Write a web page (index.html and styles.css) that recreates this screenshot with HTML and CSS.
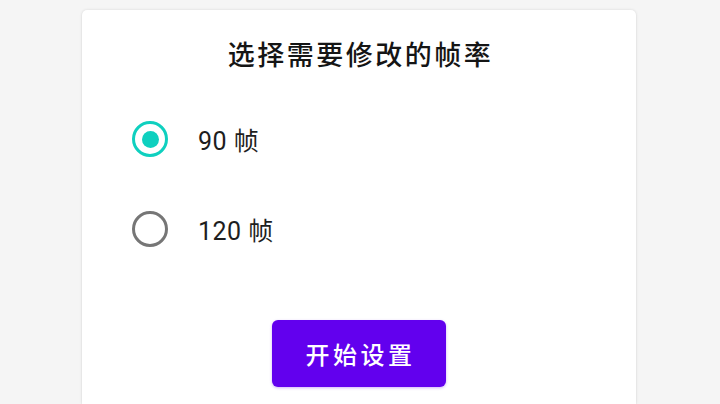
FILE: index.html
```html
<!DOCTYPE html>
<html lang="zh-CN">
<head>
<meta charset="utf-8">
<link rel="stylesheet" href="styles.css">
</head>
<body>
<div class="card">
  <h1 class="title">选择需要修改的帧率</h1>
  <div class="options">
    <label class="option">
      <span class="radio checked"><span class="dot"></span></span>
      <span class="label">90 帧</span>
    </label>
    <label class="option">
      <span class="radio"></span>
      <span class="label">120 帧</span>
    </label>
  </div>
  <div class="actions">
    <button class="btn">开始设置</button>
  </div>
</div>
</body>
</html>
```
FILE: styles.css
```css
html, body {
  margin: 0;
  padding: 0;
  background: #f5f5f5;
  height: 404px;
  overflow: hidden;
  font-family: Roboto, "Noto Sans CJK SC", sans-serif;
}
.card {
  margin: 10px 0 0 82px;
  width: 554px;
  height: 394px;
  background: #ffffff;
  border-radius: 5px 5px 0 0;
  box-shadow: 0 0 3px rgba(0,0,0,0.12), 0 1px 2px rgba(0,0,0,0.06);
  padding-top: 27px;
  box-sizing: border-box;
}
.title {
  margin: 0;
  text-align: center;
  font-size: 27px;
  line-height: 38px;
  font-weight: 500;
  letter-spacing: 2.5px;
  color: #151515;
  padding-left: 3px;
}
.options {
  margin-top: 19px;
  padding-left: 50px;
  display: flex;
  flex-direction: column;
}
.option {
  height: 90px;
  display: flex;
  align-items: center;
}
.radio {
  width: 36px;
  height: 36px;
  box-sizing: border-box;
  border: 3.5px solid #767676;
  border-radius: 50%;
  display: flex;
  align-items: center;
  justify-content: center;
}
.radio.checked {
  border-color: #0fd0bf;
}
.dot {
  width: 17px;
  height: 17px;
  border-radius: 50%;
  background: #0fd0bf;
}
.label {
  margin-left: 30px;
  font-size: 25px;
  letter-spacing: 0.5px;
  color: #1e1e1e;
}
.actions {
  margin-top: 46px;
  display: flex;
  justify-content: center;
}
.btn {
  width: 174px;
  height: 67px;
  border: none;
  border-radius: 6px;
  background: #6200ee;
  color: #ffffff;
  font-family: Roboto, "Noto Sans CJK SC", sans-serif;
  font-size: 24px;
  font-weight: 500;
  letter-spacing: 3.5px;
  padding: 0 0 0 3px;
  box-shadow: 0 1px 3px rgba(98,0,238,0.3);
}
```
